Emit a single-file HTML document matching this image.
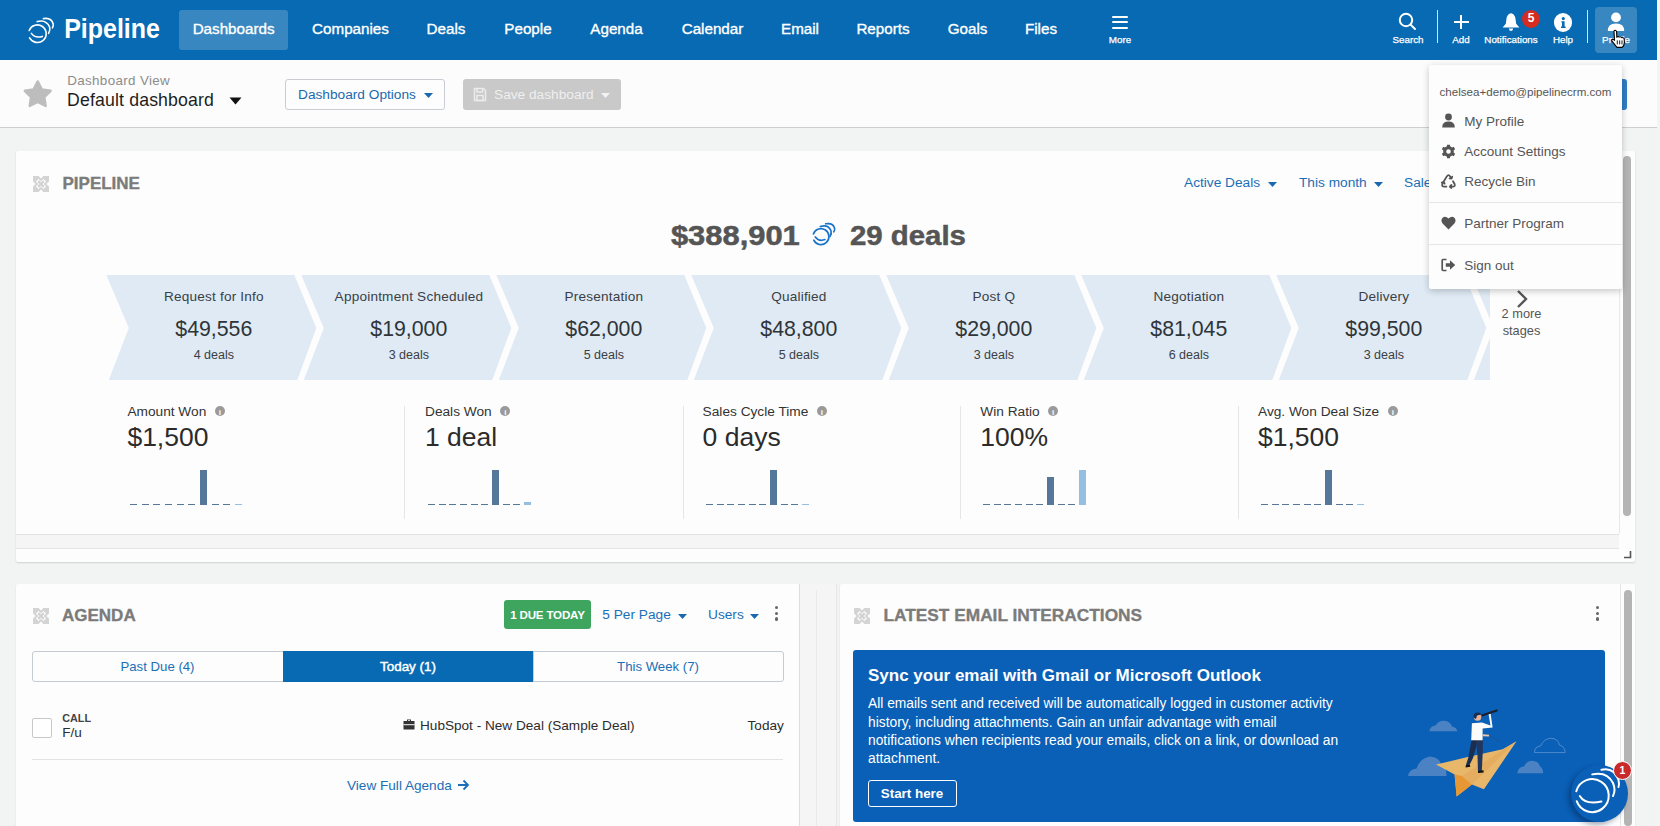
<!DOCTYPE html>
<html><head><meta charset="utf-8"><title>Pipeline Dashboard</title>
<style>
html,body{margin:0;padding:0;}
body{width:1660px;height:826px;overflow:hidden;position:relative;background:#f2f3f3;font-family:"Liberation Sans",sans-serif;}
.t{position:absolute;white-space:nowrap;line-height:1;}
.r{position:absolute;}
svg{position:absolute;overflow:visible;}
</style></head><body>
<div class="r" style="left:1657px;top:0px;width:3px;height:826px;background:#f4f4f4;"></div>
<div class="r" style="left:0px;top:0px;width:1657px;height:60px;background:#086ab2;"></div>
<svg style="left:20px;top:10px" width="40" height="40" viewBox="0 0 40 40" fill="none" stroke="#fff" stroke-width="1.6" stroke-linecap="round">
<path d="M9.2 20.5 A8.8 8.8 0 1 1 9.6 27.8"/>
<path d="M11.4 23.4 Q15 28.6 22.3 26.4"/>
<path d="M17.2 11.6 Q26 9 29.6 17 Q30.6 20.5 28.6 23.4"/>
<path d="M23.4 8.6 Q31.5 7.4 33.2 14 Q33.6 16 32.4 17.8"/>
</svg>
<div class="t" style="left:64.02px;top:15.00px;font-size:27.37px;color:#fff;font-weight:bold;transform:scaleX(0.9125);transform-origin:1.78px 0;">Pipeline</div>
<div class="r" style="left:179px;top:10px;width:109px;height:40px;background:rgba(255,255,255,0.2);border-radius:3px;"></div>
<div class="t" style="left:173.60px;width:120px;text-align:center;top:21.00px;font-size:15.2px;color:#fff;-webkit-text-stroke:0.35px #fff;">Dashboards</div>
<div class="t" style="left:290.50px;width:120px;text-align:center;top:21.00px;font-size:15.2px;color:#fff;-webkit-text-stroke:0.35px #fff;">Companies</div>
<div class="t" style="left:386.00px;width:120px;text-align:center;top:21.00px;font-size:15.2px;color:#fff;-webkit-text-stroke:0.35px #fff;">Deals</div>
<div class="t" style="left:468.00px;width:120px;text-align:center;top:21.00px;font-size:15.2px;color:#fff;-webkit-text-stroke:0.35px #fff;">People</div>
<div class="t" style="left:556.50px;width:120px;text-align:center;top:21.00px;font-size:15.2px;color:#fff;-webkit-text-stroke:0.35px #fff;">Agenda</div>
<div class="t" style="left:652.50px;width:120px;text-align:center;top:21.00px;font-size:15.2px;color:#fff;-webkit-text-stroke:0.35px #fff;">Calendar</div>
<div class="t" style="left:740.00px;width:120px;text-align:center;top:21.00px;font-size:15.2px;color:#fff;-webkit-text-stroke:0.35px #fff;">Email</div>
<div class="t" style="left:823.00px;width:120px;text-align:center;top:21.00px;font-size:15.2px;color:#fff;-webkit-text-stroke:0.35px #fff;">Reports</div>
<div class="t" style="left:907.60px;width:120px;text-align:center;top:21.00px;font-size:15.2px;color:#fff;-webkit-text-stroke:0.35px #fff;">Goals</div>
<div class="t" style="left:981.00px;width:120px;text-align:center;top:21.00px;font-size:15.2px;color:#fff;-webkit-text-stroke:0.35px #fff;">Files</div>
<div class="r" style="left:1112px;top:15.6px;width:16px;height:2px;background:#fff;border-radius:1px;"></div>
<div class="r" style="left:1112px;top:21.3px;width:16px;height:2px;background:#fff;border-radius:1px;"></div>
<div class="r" style="left:1112px;top:26.9px;width:16px;height:2px;background:#fff;border-radius:1px;"></div>
<div class="t" style="left:1080.00px;width:80px;text-align:center;top:35.00px;font-size:9.8px;color:#fff;-webkit-text-stroke:0.25px #fff;">More</div>
<div class="t" style="left:1368.00px;width:80px;text-align:center;top:35.00px;font-size:9.8px;color:#fff;-webkit-text-stroke:0.25px #fff;">Search</div>
<div class="t" style="left:1421.00px;width:80px;text-align:center;top:35.00px;font-size:9.8px;color:#fff;-webkit-text-stroke:0.25px #fff;">Add</div>
<div class="t" style="left:1471.00px;width:80px;text-align:center;top:35.00px;font-size:9.8px;color:#fff;-webkit-text-stroke:0.25px #fff;">Notifications</div>
<div class="t" style="left:1523.00px;width:80px;text-align:center;top:35.00px;font-size:9.8px;color:#fff;-webkit-text-stroke:0.25px #fff;">Help</div>
<div class="t" style="left:1576.00px;width:80px;text-align:center;top:35.00px;font-size:9.8px;color:#fff;-webkit-text-stroke:0.25px #fff;">Profile</div>
<svg style="left:1398px;top:12px" width="20" height="20" viewBox="0 0 20 20" fill="none" stroke="#fff" stroke-width="2" stroke-linecap="round">
<circle cx="8" cy="8" r="6.2"/><path d="M12.6 12.6 L17 17"/></svg>
<div class="r" style="left:1437.3px;top:10px;width:1.2px;height:33px;background:rgba(225,245,255,0.9);"></div>
<div class="r" style="left:1587px;top:10px;width:1.2px;height:33px;background:rgba(225,245,255,0.9);"></div>
<div class="r" style="left:1454px;top:21.3px;width:14.5px;height:2px;background:#fff;"></div>
<div class="r" style="left:1460.2px;top:15.3px;width:2px;height:14px;background:#fff;"></div>
<svg style="left:1502px;top:12px" width="18" height="20" viewBox="0 0 18 20">
<path fill="#fff" d="M9 1.2 C11.8 1.6 13.4 4.4 13.6 7.6 L14.2 11.8 L17.4 15.6 L0.6 15.6 L3.8 11.8 L4.4 7.6 C4.6 4.4 6.2 1.6 9 1.2 Z"/>
<path fill="#fff" d="M6.8 16.5 L11.2 16.5 Q10.6 19 9 19 Q7.4 19 6.8 16.5Z"/></svg>
<div class="r" style="left:1522px;top:10px;width:18px;height:18px;border-radius:50%;background:#d62b1f;"></div>
<div class="t" style="left:1522.00px;width:18px;text-align:center;top:12.00px;font-size:12px;color:#fff;font-weight:bold;">5</div>
<div class="r" style="left:1553.5px;top:13px;width:18.5px;height:18.5px;border-radius:50%;background:#fff;"></div>
<svg style="left:1553.5px;top:13px" width="18.5" height="18.5" viewBox="0 0 18.5 18.5" fill="#086ab2"><circle cx="9.3" cy="5.6" r="1.6"/><path d="M7.4 8.2 H10.6 V13.6 H11.6 V15 H7 V13.6 H8 V9.6 H7.4 Z"/></svg>
<div class="r" style="left:1595px;top:7px;width:42px;height:46px;background:rgba(255,255,255,0.2);border-radius:4px;"></div>
<svg style="left:1605px;top:11px" width="22" height="22" viewBox="0 0 22 22" fill="#fff">
<circle cx="11" cy="6.4" r="4.9"/><path d="M2.8 20 Q2.8 12.6 11 12.6 Q19.2 12.6 19.2 20 Z"/></svg>
<svg style="left:1609px;top:29px" width="20" height="20" viewBox="0 0 20 20">
<path fill="#fff" stroke="#000" stroke-width="1.1" stroke-linejoin="round" d="M5.2 1.6 Q6.9 0.8 7.6 2.4 L7.8 8.2 Q9 7.2 10.4 8 Q11.8 7.4 12.8 8.6 Q14.4 8.2 15.2 9.8 L15.4 13.6 Q15.2 16.6 13.2 18.4 L8 18.4 Q5.8 15.8 3 12.2 Q2.2 10.8 3.6 10.3 Q4.7 10.2 5.5 11.4 L5 2.6 Z"/>
<path stroke="#000" stroke-width="0.9" d="M8.3 11.4 V15.4 M10.7 11.4 V15.4 M13 11.4 V15.4"/></svg>
<div class="r" style="left:0px;top:60px;width:1657px;height:67px;background:#fcfcfc;"></div>
<div class="r" style="left:0px;top:127px;width:1657px;height:1px;background:#cfcfcf;"></div>
<svg style="left:22px;top:78px" width="32" height="31" viewBox="0 0 32 31"><path fill="#bdbdbd" stroke="#bdbdbd" stroke-width="2.4" stroke-linejoin="round" d="M15.70 3.40 L19.81 11.34 L28.63 12.80 L22.36 19.16 L23.69 28.00 L15.70 24.00 L7.71 28.00 L9.04 19.16 L2.77 12.80 L11.59 11.34 Z"/></svg>
<div class="t" style="left:67.2px;top:74.00px;font-size:13.4px;color:#8c8c8c;letter-spacing:0.35px;">Dashboard View</div>
<div class="t" style="left:67px;top:92.00px;font-size:17.7px;color:#1e1e1e;letter-spacing:0.15px;">Default dashboard</div>
<svg style="left:229px;top:97px" width="13" height="8" viewBox="0 0 13 8"><path d="M0.5 0.5 L12.5 0.5 L6.5 7.5 Z" fill="#111"/></svg>
<div class="r" style="left:285px;top:79px;width:158px;height:29px;border:1px solid #c9cdd1;border-radius:3px;background:#fdfdfd;"></div>
<div class="t" style="left:298px;top:88.00px;font-size:13.7px;color:#1b69ad;">Dashboard Options</div>
<svg style="left:424.0px;top:93.0px" width="9" height="5" viewBox="0 0 9 5"><path d="M0 0 L9 0 L4.5 5 Z" fill="#1b69ad"/></svg>
<div class="r" style="left:463px;top:79px;width:158px;height:31px;background:#c9c9c9;border-radius:3px;"></div>
<svg style="left:473px;top:87px" width="14" height="15" viewBox="0 0 14 15" fill="none" stroke="#ececec" stroke-width="1.5">
<path d="M1.5 1.5 H10.5 L12.5 3.5 V13.5 H1.5 Z"/><path d="M4 1.5 V5 H9.5 V1.5"/><rect x="4" y="8.5" width="6" height="5"/></svg>
<div class="t" style="left:494px;top:88.00px;font-size:13.7px;color:#efefef;">Save dashboard</div>
<svg style="left:600.5px;top:93.0px" width="9" height="5" viewBox="0 0 9 5"><path d="M0 0 L9 0 L4.5 5 Z" fill="#f2f2f2"/></svg>
<div class="r" style="left:1540px;top:79px;width:87px;height:31px;background:#2f7fc4;border-radius:3px;"></div>
<div class="r" style="left:16px;top:151px;width:1619px;height:411px;background:#fdfdfd;border-radius:2px;box-shadow:0 1px 2px rgba(0,0,0,0.14);"></div>
<div class="r" style="left:16px;top:534px;width:1603px;height:1px;background:#e2e2e2;"></div>
<div class="r" style="left:16px;top:535px;width:1603px;height:13px;background:#f5f5f5;"></div>
<div class="r" style="left:16px;top:548px;width:1603px;height:1px;background:#e4e4e4;"></div>
<div class="r" style="left:1619px;top:151px;width:1px;height:383px;background:#e8e8e8;"></div>
<div class="r" style="left:1623px;top:156px;width:8px;height:360px;background:#b4b4b4;border-radius:4px;"></div>
<svg style="left:1623px;top:550px" width="9" height="9" viewBox="0 0 9 9"><path d="M7.5 1 V7.5 H1" fill="none" stroke="#555" stroke-width="1.6"/></svg>
<svg style="left:32.5px;top:175.5px" width="16" height="16" viewBox="0 0 16 16" fill="#d4d4d4">
<path d="M0 0 H5.6 L8 2.6 L10.4 0 H16 V5.6 L13.4 8 L16 10.4 V16 H10.4 L8 13.4 L5.6 16 H0 V10.4 L2.6 8 L0 5.6 Z M8 5.2 L5.6 3 L3 5.6 L5.2 8 L3 10.4 L5.6 13 L8 10.8 L10.4 13 L13 10.4 L10.8 8 L13 5.6 L10.4 3 Z" fill-rule="evenodd"/>
<path d="M5.2 5.2 L10.8 10.8 M10.8 5.2 L5.2 10.8" stroke="#d4d4d4" stroke-width="2.6"/></svg>
<div class="t" style="left:62.5px;top:175.00px;font-size:17px;color:#7b7b7b;font-weight:bold;-webkit-text-stroke:0.35px #7b7b7b;">PIPELINE</div>
<div class="t" style="left:1184px;top:176.00px;font-size:13.7px;color:#1b6fb6;">Active Deals</div>
<svg style="left:1268.0px;top:181.5px" width="9" height="5" viewBox="0 0 9 5"><path d="M0 0 L9 0 L4.5 5 Z" fill="#1b69ad"/></svg>
<div class="t" style="left:1299px;top:176.00px;font-size:13.7px;color:#1b6fb6;">This month</div>
<svg style="left:1373.5px;top:181.5px" width="9" height="5" viewBox="0 0 9 5"><path d="M0 0 L9 0 L4.5 5 Z" fill="#1b69ad"/></svg>
<div class="t" style="left:1404px;top:176.00px;font-size:13.7px;color:#1b6fb6;">Sales</div>
<div class="t" style="left:670.80px;top:223.00px;font-size:26.96px;color:#555;font-weight:bold;transform:scaleX(1.1462);transform-origin:0.40px 0;-webkit-text-stroke:0.5px #555;">$388,901</div>
<svg style="left:810px;top:221px" width="28" height="26" viewBox="0 0 30 28" fill="none" stroke="#1a73c9" stroke-width="1.8" stroke-linecap="round">
<path d="M3.6 14 A8.6 8.6 0 1 1 4 20.6"/>
<path d="M5.6 17.2 Q9.5 22.5 16 20"/>
<path d="M11 6 Q19.5 3.5 22.5 10.5 Q23.4 13.5 21.6 16.6"/>
<path d="M16.8 3 Q25 1.8 26.4 8 Q26.8 10 25.6 11.6"/>
</svg>
<div class="t" style="left:849.86px;top:223.00px;font-size:26.96px;color:#555;font-weight:bold;transform:scaleX(1.0909);transform-origin:0.94px 0;-webkit-text-stroke:0.5px #555;">29 deals</div>
<svg style="left:0px;top:0px" width="1660" height="826" viewBox="0 0 1660 826"><defs><clipPath id="stc"><rect x="100" y="270" width="1390" height="120"/></clipPath></defs><g clip-path="url(#stc)" fill="#dfeaf4"><polygon points="106.3,275 294.3,275 316.3,328 297.3,380 108.8,380 128.8,328"/><polygon points="301.3,275 489.3,275 511.3,328 492.3,380 303.8,380 323.8,328"/><polygon points="496.3,275 684.3,275 706.3,328 687.3,380 498.8,380 518.8,328"/><polygon points="691.3,275 879.3,275 901.3,328 882.3,380 693.8,380 713.8,328"/><polygon points="886.3,275 1074.3,275 1096.3,328 1077.3,380 888.8,380 908.8,328"/><polygon points="1081.3,275 1269.3,275 1291.3,328 1272.3,380 1083.8,380 1103.8,328"/><polygon points="1276.3,275 1464.3,275 1486.3,328 1467.3,380 1278.8,380 1298.8,328"/><polygon points="1471.3,275 1659.3,275 1681.3,328 1662.3,380 1473.8,380 1493.8,328"/></g></svg>
<div class="t" style="left:123.90px;width:180px;text-align:center;top:290.00px;font-size:13.6px;color:#3a4045;letter-spacing:0.2px;">Request for Info</div>
<div class="t" style="left:123.80px;width:180px;text-align:center;top:319.00px;font-size:21.3px;color:#2e3438;">$49,556</div>
<div class="t" style="left:123.80px;width:180px;text-align:center;top:349.00px;font-size:12.5px;color:#3a4045;">4 deals</div>
<div class="t" style="left:318.90px;width:180px;text-align:center;top:290.00px;font-size:13.6px;color:#3a4045;letter-spacing:0.2px;">Appointment Scheduled</div>
<div class="t" style="left:318.80px;width:180px;text-align:center;top:319.00px;font-size:21.3px;color:#2e3438;">$19,000</div>
<div class="t" style="left:318.80px;width:180px;text-align:center;top:349.00px;font-size:12.5px;color:#3a4045;">3 deals</div>
<div class="t" style="left:513.90px;width:180px;text-align:center;top:290.00px;font-size:13.6px;color:#3a4045;letter-spacing:0.2px;">Presentation</div>
<div class="t" style="left:513.80px;width:180px;text-align:center;top:319.00px;font-size:21.3px;color:#2e3438;">$62,000</div>
<div class="t" style="left:513.80px;width:180px;text-align:center;top:349.00px;font-size:12.5px;color:#3a4045;">5 deals</div>
<div class="t" style="left:708.90px;width:180px;text-align:center;top:290.00px;font-size:13.6px;color:#3a4045;letter-spacing:0.2px;">Qualified</div>
<div class="t" style="left:708.80px;width:180px;text-align:center;top:319.00px;font-size:21.3px;color:#2e3438;">$48,800</div>
<div class="t" style="left:708.80px;width:180px;text-align:center;top:349.00px;font-size:12.5px;color:#3a4045;">5 deals</div>
<div class="t" style="left:903.90px;width:180px;text-align:center;top:290.00px;font-size:13.6px;color:#3a4045;letter-spacing:0.2px;">Post Q</div>
<div class="t" style="left:903.80px;width:180px;text-align:center;top:319.00px;font-size:21.3px;color:#2e3438;">$29,000</div>
<div class="t" style="left:903.80px;width:180px;text-align:center;top:349.00px;font-size:12.5px;color:#3a4045;">3 deals</div>
<div class="t" style="left:1098.90px;width:180px;text-align:center;top:290.00px;font-size:13.6px;color:#3a4045;letter-spacing:0.2px;">Negotiation</div>
<div class="t" style="left:1098.80px;width:180px;text-align:center;top:319.00px;font-size:21.3px;color:#2e3438;">$81,045</div>
<div class="t" style="left:1098.80px;width:180px;text-align:center;top:349.00px;font-size:12.5px;color:#3a4045;">6 deals</div>
<div class="t" style="left:1293.90px;width:180px;text-align:center;top:290.00px;font-size:13.6px;color:#3a4045;letter-spacing:0.2px;">Delivery</div>
<div class="t" style="left:1293.80px;width:180px;text-align:center;top:319.00px;font-size:21.3px;color:#2e3438;">$99,500</div>
<div class="t" style="left:1293.80px;width:180px;text-align:center;top:349.00px;font-size:12.5px;color:#3a4045;">3 deals</div>
<svg style="left:1515px;top:289px" width="14" height="20" viewBox="0 0 14 20"><path d="M3 2 L11 10 L3 18" fill="none" stroke="#555" stroke-width="2.4"/></svg>
<div class="t" style="left:1481.50px;width:80px;text-align:center;top:308.00px;font-size:12.8px;color:#555;">2 more</div>
<div class="t" style="left:1481.50px;width:80px;text-align:center;top:325.00px;font-size:12.8px;color:#555;">stages</div>
<div class="t" style="left:127.4px;top:405.00px;font-size:13.7px;color:#333;">Amount Won</div>
<div class="r" style="left:214.8px;top:406.3px;width:10px;height:10px;border-radius:50%;background:#9a9a9a;"></div>
<div class="t" style="left:214.84px;width:10px;text-align:center;top:409.00px;font-size:8px;color:#fff;font-weight:bold;">i</div>
<div class="t" style="left:127.4px;top:424.00px;font-size:26.5px;color:#2b2b2b;">$1,500</div>
<div class="r" style="left:130.0px;top:503.5px;width:7px;height:1.6px;background:#557799;"></div>
<div class="r" style="left:141.67px;top:503.5px;width:7px;height:1.6px;background:#557799;"></div>
<div class="r" style="left:153.34px;top:503.5px;width:7px;height:1.6px;background:#557799;"></div>
<div class="r" style="left:165.01px;top:503.5px;width:7px;height:1.6px;background:#557799;"></div>
<div class="r" style="left:176.68px;top:503.5px;width:7px;height:1.6px;background:#557799;"></div>
<div class="r" style="left:188.35px;top:503.5px;width:7px;height:1.6px;background:#557799;"></div>
<div class="r" style="left:200.02px;top:470px;width:7px;height:35px;background:#557799;"></div>
<div class="r" style="left:211.69px;top:503.5px;width:7px;height:1.6px;background:#557799;"></div>
<div class="r" style="left:223.36px;top:503.5px;width:7px;height:1.6px;background:#557799;"></div>
<div class="r" style="left:235.03px;top:503.5px;width:7px;height:1.6px;background:#94bfe3;"></div>
<div class="t" style="left:425px;top:405.00px;font-size:13.7px;color:#333;">Deals Won</div>
<div class="r" style="left:500.3px;top:406.3px;width:10px;height:10px;border-radius:50%;background:#9a9a9a;"></div>
<div class="t" style="left:500.25px;width:10px;text-align:center;top:409.00px;font-size:8px;color:#fff;font-weight:bold;">i</div>
<div class="t" style="left:425px;top:424.00px;font-size:26.5px;color:#2b2b2b;">1 deal</div>
<div class="r" style="left:428.0px;top:503.5px;width:7px;height:1.6px;background:#557799;"></div>
<div class="r" style="left:438.67px;top:503.5px;width:7px;height:1.6px;background:#557799;"></div>
<div class="r" style="left:449.34px;top:503.5px;width:7px;height:1.6px;background:#557799;"></div>
<div class="r" style="left:460.01px;top:503.5px;width:7px;height:1.6px;background:#557799;"></div>
<div class="r" style="left:470.68px;top:503.5px;width:7px;height:1.6px;background:#557799;"></div>
<div class="r" style="left:481.35px;top:503.5px;width:7px;height:1.6px;background:#557799;"></div>
<div class="r" style="left:492.02px;top:470px;width:7px;height:35px;background:#557799;"></div>
<div class="r" style="left:502.69px;top:503.5px;width:7px;height:1.6px;background:#557799;"></div>
<div class="r" style="left:513.36px;top:503.5px;width:7px;height:1.6px;background:#557799;"></div>
<div class="r" style="left:524.03px;top:502px;width:7px;height:3px;background:#94bfe3;"></div>
<div class="t" style="left:702.6px;top:405.00px;font-size:13.7px;color:#333;">Sales Cycle Time</div>
<div class="r" style="left:816.9px;top:406.3px;width:10px;height:10px;border-radius:50%;background:#9a9a9a;"></div>
<div class="t" style="left:816.92px;width:10px;text-align:center;top:409.00px;font-size:8px;color:#fff;font-weight:bold;">i</div>
<div class="t" style="left:702.6px;top:424.00px;font-size:26.5px;color:#2b2b2b;">0 days</div>
<div class="r" style="left:706.1px;top:503.5px;width:7px;height:1.6px;background:#557799;"></div>
<div class="r" style="left:716.77px;top:503.5px;width:7px;height:1.6px;background:#557799;"></div>
<div class="r" style="left:727.44px;top:503.5px;width:7px;height:1.6px;background:#557799;"></div>
<div class="r" style="left:738.11px;top:503.5px;width:7px;height:1.6px;background:#557799;"></div>
<div class="r" style="left:748.78px;top:503.5px;width:7px;height:1.6px;background:#557799;"></div>
<div class="r" style="left:759.45px;top:503.5px;width:7px;height:1.6px;background:#557799;"></div>
<div class="r" style="left:770.12px;top:470px;width:7px;height:35px;background:#557799;"></div>
<div class="r" style="left:780.79px;top:503.5px;width:7px;height:1.6px;background:#557799;"></div>
<div class="r" style="left:791.46px;top:503.5px;width:7px;height:1.6px;background:#557799;"></div>
<div class="r" style="left:802.13px;top:503.5px;width:7px;height:1.6px;background:#94bfe3;"></div>
<div class="t" style="left:980.3px;top:405.00px;font-size:13.7px;color:#333;">Win Ratio</div>
<div class="r" style="left:1048.2px;top:406.3px;width:10px;height:10px;border-radius:50%;background:#9a9a9a;"></div>
<div class="t" style="left:1048.18px;width:10px;text-align:center;top:409.00px;font-size:8px;color:#fff;font-weight:bold;">i</div>
<div class="t" style="left:980.3px;top:424.00px;font-size:26.5px;color:#2b2b2b;">100%</div>
<div class="r" style="left:983.0px;top:503.5px;width:7px;height:1.6px;background:#557799;"></div>
<div class="r" style="left:993.67px;top:503.5px;width:7px;height:1.6px;background:#557799;"></div>
<div class="r" style="left:1004.34px;top:503.5px;width:7px;height:1.6px;background:#557799;"></div>
<div class="r" style="left:1015.01px;top:503.5px;width:7px;height:1.6px;background:#557799;"></div>
<div class="r" style="left:1025.68px;top:503.5px;width:7px;height:1.6px;background:#557799;"></div>
<div class="r" style="left:1036.35px;top:503.5px;width:7px;height:1.6px;background:#557799;"></div>
<div class="r" style="left:1047.02px;top:477.2px;width:7px;height:27.8px;background:#557799;"></div>
<div class="r" style="left:1057.69px;top:503.5px;width:7px;height:1.6px;background:#557799;"></div>
<div class="r" style="left:1068.36px;top:503.5px;width:7px;height:1.6px;background:#557799;"></div>
<div class="r" style="left:1079.03px;top:470px;width:7px;height:35px;background:#94bfe3;"></div>
<div class="t" style="left:1258px;top:405.00px;font-size:13.7px;color:#333;">Avg. Won Deal Size</div>
<div class="r" style="left:1387.8px;top:406.3px;width:10px;height:10px;border-radius:50%;background:#9a9a9a;"></div>
<div class="t" style="left:1387.83px;width:10px;text-align:center;top:409.00px;font-size:8px;color:#fff;font-weight:bold;">i</div>
<div class="t" style="left:1258px;top:424.00px;font-size:26.5px;color:#2b2b2b;">$1,500</div>
<div class="r" style="left:1261.1px;top:503.5px;width:7px;height:1.6px;background:#557799;"></div>
<div class="r" style="left:1271.77px;top:503.5px;width:7px;height:1.6px;background:#557799;"></div>
<div class="r" style="left:1282.44px;top:503.5px;width:7px;height:1.6px;background:#557799;"></div>
<div class="r" style="left:1293.11px;top:503.5px;width:7px;height:1.6px;background:#557799;"></div>
<div class="r" style="left:1303.78px;top:503.5px;width:7px;height:1.6px;background:#557799;"></div>
<div class="r" style="left:1314.45px;top:503.5px;width:7px;height:1.6px;background:#557799;"></div>
<div class="r" style="left:1325.12px;top:470px;width:7px;height:35px;background:#557799;"></div>
<div class="r" style="left:1335.79px;top:503.5px;width:7px;height:1.6px;background:#557799;"></div>
<div class="r" style="left:1346.46px;top:503.5px;width:7px;height:1.6px;background:#557799;"></div>
<div class="r" style="left:1357.13px;top:503.5px;width:7px;height:1.6px;background:#94bfe3;"></div>
<div class="r" style="left:404px;top:406px;width:1px;height:113px;background:#e6e6e6;"></div>
<div class="r" style="left:682.5px;top:406px;width:1px;height:113px;background:#e6e6e6;"></div>
<div class="r" style="left:959.5px;top:406px;width:1px;height:113px;background:#e6e6e6;"></div>
<div class="r" style="left:1237.5px;top:406px;width:1px;height:113px;background:#e6e6e6;"></div>
<div class="r" style="left:16px;top:584px;width:783px;height:260px;background:#fdfdfd;border-radius:2px 0 0 0;box-shadow:0 1px 2px rgba(0,0,0,0.10);"></div>
<div class="r" style="left:799px;top:584px;width:37px;height:242px;background:#f5f5f5;"></div>
<div class="r" style="left:799px;top:584px;width:1px;height:242px;background:#dedede;"></div>
<div class="r" style="left:815.5px;top:590px;width:1px;height:236px;background:#e9e9e9;"></div>
<div class="r" style="left:835.5px;top:584px;width:1px;height:242px;background:#e6e6e6;"></div>
<svg style="left:32.5px;top:607.5px" width="16" height="16" viewBox="0 0 16 16" fill="#d4d4d4">
<path d="M0 0 H5.6 L8 2.6 L10.4 0 H16 V5.6 L13.4 8 L16 10.4 V16 H10.4 L8 13.4 L5.6 16 H0 V10.4 L2.6 8 L0 5.6 Z M8 5.2 L5.6 3 L3 5.6 L5.2 8 L3 10.4 L5.6 13 L8 10.8 L10.4 13 L13 10.4 L10.8 8 L13 5.6 L10.4 3 Z" fill-rule="evenodd"/>
<path d="M5.2 5.2 L10.8 10.8 M10.8 5.2 L5.2 10.8" stroke="#d4d4d4" stroke-width="2.6"/></svg>
<div class="t" style="left:62px;top:607.00px;font-size:17px;color:#7b7b7b;font-weight:bold;-webkit-text-stroke:0.35px #7b7b7b;">AGENDA</div>
<div class="r" style="left:504px;top:600px;width:87px;height:29px;background:#3ea55e;border-radius:3px;"></div>
<div class="t" style="left:502.50px;width:90px;text-align:center;top:609.00px;font-size:11.6px;color:#fff;font-weight:bold;letter-spacing:-0.2px;">1 DUE TODAY</div>
<div class="t" style="left:602.3px;top:608.00px;font-size:13.7px;color:#1b6fb6;">5 Per Page</div>
<svg style="left:677.5px;top:613.5px" width="9" height="5" viewBox="0 0 9 5"><path d="M0 0 L9 0 L4.5 5 Z" fill="#1b69ad"/></svg>
<div class="t" style="left:708px;top:608.00px;font-size:13.7px;color:#1b6fb6;">Users</div>
<svg style="left:750.0px;top:613.5px" width="9" height="5" viewBox="0 0 9 5"><path d="M0 0 L9 0 L4.5 5 Z" fill="#1b69ad"/></svg>
<div class="r" style="left:774.7px;top:605.7px;width:3.8px;height:3.8px;border-radius:50%;background:#666;"></div>
<div class="r" style="left:774.7px;top:611.5px;width:3.8px;height:3.8px;border-radius:50%;background:#666;"></div>
<div class="r" style="left:774.7px;top:617.3000000000001px;width:3.8px;height:3.8px;border-radius:50%;background:#666;"></div>
<div class="r" style="left:32px;top:651px;width:750px;height:29px;border:1px solid #c5cbd0;border-radius:3px;background:#fdfdfd;"></div>
<div class="r" style="left:283px;top:651px;width:250px;height:31px;background:#086ab2;"></div>
<div class="r" style="left:533px;top:652px;width:1px;height:29px;background:#c5cbd0;"></div>
<div class="t" style="left:57.50px;width:200px;text-align:center;top:660.00px;font-size:13.2px;color:#1b6fb6;">Past Due (4)</div>
<div class="t" style="left:308.00px;width:200px;text-align:center;top:660.00px;font-size:13.4px;color:#fff;-webkit-text-stroke:0.45px #fff;">Today (1)</div>
<div class="t" style="left:558.00px;width:200px;text-align:center;top:660.00px;font-size:13.2px;color:#1b6fb6;">This Week (7)</div>
<div class="r" style="left:32px;top:718px;width:18px;height:18px;border:1px solid #c8c8c8;border-radius:2px;background:#fff;"></div>
<div class="t" style="left:62.2px;top:713.00px;font-size:10.8px;color:#444;font-weight:bold;">CALL</div>
<div class="t" style="left:62.2px;top:726.00px;font-size:13.5px;color:#2c2c2c;">F/u</div>
<svg style="left:403px;top:719px" width="12" height="11" viewBox="0 0 12 11" fill="#333">
<path d="M4 0.5 H8 V2 H11.5 V10.5 H0.5 V2 H4 Z M5 1.3 V2 H7 V1.3 Z"/><rect x="0.5" y="5.2" width="11" height="1" fill="#fcfcfc"/></svg>
<div class="t" style="left:420px;top:719.00px;font-size:13.6px;color:#2c2c2c;">HubSpot - New Deal (Sample Deal)</div>
<div class="t" style="right:876.2px;top:719.00px;font-size:13.6px;color:#2c2c2c;text-align:right;">Today</div>
<div class="r" style="left:32px;top:759px;width:751px;height:1px;background:#e3e3e3;"></div>
<div class="t" style="left:347px;top:779.00px;font-size:13.6px;color:#1b6fb6;">View Full Agenda</div>
<svg style="left:457px;top:779px" width="13" height="12" viewBox="0 0 13 12"><path d="M1 6 H11 M6.5 1.5 L11 6 L6.5 10.5" fill="none" stroke="#1b6fb6" stroke-width="1.8"/></svg>
<div class="r" style="left:840px;top:584px;width:795px;height:260px;background:#fdfdfd;border-radius:2px;box-shadow:0 1px 2px rgba(0,0,0,0.10);"></div>
<div class="r" style="left:1620px;top:584px;width:1px;height:242px;background:#e6e6e6;"></div>
<div class="r" style="left:1624px;top:590px;width:8px;height:236px;background:#b4b4b4;border-radius:4px;"></div>
<svg style="left:853.5px;top:607.5px" width="16" height="16" viewBox="0 0 16 16" fill="#d4d4d4">
<path d="M0 0 H5.6 L8 2.6 L10.4 0 H16 V5.6 L13.4 8 L16 10.4 V16 H10.4 L8 13.4 L5.6 16 H0 V10.4 L2.6 8 L0 5.6 Z M8 5.2 L5.6 3 L3 5.6 L5.2 8 L3 10.4 L5.6 13 L8 10.8 L10.4 13 L13 10.4 L10.8 8 L13 5.6 L10.4 3 Z" fill-rule="evenodd"/>
<path d="M5.2 5.2 L10.8 10.8 M10.8 5.2 L5.2 10.8" stroke="#d4d4d4" stroke-width="2.6"/></svg>
<div class="t" style="left:883.5px;top:607.00px;font-size:17.3px;color:#7b7b7b;font-weight:bold;-webkit-text-stroke:0.35px #7b7b7b;">LATEST EMAIL INTERACTIONS</div>
<div class="r" style="left:1595.5px;top:605.7px;width:3.8px;height:3.8px;border-radius:50%;background:#666;"></div>
<div class="r" style="left:1595.5px;top:611.5px;width:3.8px;height:3.8px;border-radius:50%;background:#666;"></div>
<div class="r" style="left:1595.5px;top:617.3000000000001px;width:3.8px;height:3.8px;border-radius:50%;background:#666;"></div>
<div class="r" style="left:853px;top:650px;width:752px;height:172px;background:#0a5fb6;border-radius:3px;"></div>
<div class="t" style="left:868px;top:667.00px;font-size:17px;color:#fff;font-weight:bold;">Sync your email with Gmail or Microsoft Outlook</div>
<div class="t" style="left:868px;top:697.00px;font-size:13.8px;color:#fff;">All emails sent and received will be automatically logged in customer activity</div>
<div class="t" style="left:868px;top:716.00px;font-size:13.8px;color:#fff;">history, including attachments. Gain an unfair advantage with email</div>
<div class="t" style="left:868px;top:734.00px;font-size:13.8px;color:#fff;">notifications when recipients read your emails, click on a link, or download an</div>
<div class="t" style="left:868px;top:752.00px;font-size:13.8px;color:#fff;">attachment.</div>
<div class="r" style="left:868px;top:780px;width:87px;height:25px;border:1.5px solid #fff;border-radius:3px;"></div>
<div class="t" style="left:867.00px;width:90px;text-align:center;top:787.00px;font-size:13.4px;color:#fff;font-weight:bold;">Start here</div>
<svg style="left:1400px;top:700px" width="180" height="110" viewBox="0 0 180 110">
<g fill="#4a82c4">
<path d="M29.3 31.3 Q30 26 35.5 25.5 Q38.5 20.6 44 20.8 Q50.5 21.5 52 26.5 Q56.8 27.5 57.3 31.3 Z"/>
<path d="M8 76 Q9 69 16.5 68.5 Q20 58 30 56.5 Q39 57 41 64 Q46.6 65.5 46.6 76 Z"/>
<path d="M117.2 73.2 Q118 67 124 66.5 Q127 60.6 132.5 60.8 Q139 61.5 140 66.5 Q143.1 68 143.1 73.2 Z"/>
</g>
<path d="M134.5 52.6 Q134.5 46.5 140.5 46 Q144 38.5 151 38.2 Q158 38.5 159.5 45 Q165.1 46.5 165.1 52.6 Z" fill="none" stroke="#5f93cf" stroke-width="0.8"/>
<path d="M36 64.6 L66.6 57.3 L102.5 49.3 L116.5 41.3 L83.9 89.2 L71.9 84.6 L56.6 96.5 L54.6 74.6 Z" fill="#e8b76a"/>
<path d="M54.6 74.6 L56.6 96.5 L71.9 84.6 L62 76 Z" fill="#e79834"/>
<path d="M62 76 L116.5 41.3 L71.9 84.6 Z" fill="#e3a75a" opacity="0.6"/>
<path d="M71.5 40 L78 40 L73 58 L69 66 L65.5 66.5 L68.5 57 Z" fill="#1b2e50"/>
<path d="M76 40 L83 40 L82.6 55 L81.8 71.5 L78 72 L77.5 56 Z" fill="#22375e"/>
<path d="M66 65.5 L70 64.8 L70.2 66.8 L65.6 67.6 Z M78 71 L83.5 70.2 L83.6 72.4 L78 73 Z" fill="#111"/>
<path d="M71.9 23.3 L81.9 22.6 L90.5 25.6 L88.5 13.8 L90.6 13.4 L92.6 27.6 L82.6 28.6 L82.6 40.2 L71.2 40.2 Z" fill="#fbfbfb"/>
<path d="M82.6 34.2 L89.2 34.8 L89 36.4 L82.6 36.2 Z" fill="#f0c4a8"/>
<circle cx="77.6" cy="17.2" r="3.6" fill="#e9b39a"/>
<path d="M73.6 17.6 Q73.2 12.4 78 12.6 Q81 12.8 81.2 14.6 L77 15.4 L76 19 Z" fill="#1b2e50"/>
<path d="M81.5 14.6 L97.2 9.3 L97.8 11.3 L82.2 16.6 Z" fill="#1d1d2b"/>
<path d="M89.2 35.3 L100 42" stroke="#2a4a7a" stroke-width="0.6"/>
</svg>
<div class="r" style="left:1571px;top:765px;width:57px;height:57px;border-radius:50%;background:#0a5fb6;box-shadow:-3px 3px 5px rgba(0,20,60,0.35);"></div>
<svg style="left:1560px;top:750px" width="80" height="76" viewBox="0 0 80 76" fill="none" stroke="#fff" stroke-width="2" stroke-linecap="round">
<path d="M16.3 41.3 A16.5 16.5 0 1 1 16.7 51.2"/>
<path d="M19.8 46 Q25 55 41.4 51.6"/>
<path d="M32.2 24.4 Q47 21 53 33 Q56 40 53 46"/>
<path d="M41.4 19.8 Q54 17 58.5 30 Q59.5 34 58.5 37"/>
</svg>
<div class="r" style="left:1612.5px;top:761px;width:17px;height:17px;border-radius:50%;background:#c9292a;border:1.5px solid #fff;"></div>
<div class="t" style="left:1614.50px;width:16px;text-align:center;top:765.00px;font-size:10.5px;color:#fff;font-weight:bold;">1</div>
<div class="r" style="left:1429px;top:65px;width:193px;height:223.5px;background:#fdfdfd;border-radius:2px;box-shadow:0 2px 7px rgba(0,0,0,0.22);"></div>
<div class="t" style="left:1439.5px;top:86.00px;font-size:11.6px;color:#555;">chelsea+demo@pipelinecrm.com</div>
<div class="t" style="left:1464.3px;top:115.00px;font-size:13.5px;color:#555;">My Profile</div>
<div class="t" style="left:1464.3px;top:145.00px;font-size:13.5px;color:#555;">Account Settings</div>
<div class="t" style="left:1464.3px;top:175.00px;font-size:13.5px;color:#555;">Recycle Bin</div>
<div class="t" style="left:1464.3px;top:217.00px;font-size:13.5px;color:#555;">Partner Program</div>
<div class="t" style="left:1464.3px;top:259.00px;font-size:13.5px;color:#555;">Sign out</div>
<div class="r" style="left:1429px;top:202px;width:193px;height:1px;background:#e6e6e6;"></div>
<div class="r" style="left:1429px;top:244px;width:193px;height:1px;background:#e6e6e6;"></div>
<svg style="left:1441px;top:113px" width="15" height="15" viewBox="0 0 15 15" fill="#555"><circle cx="7.5" cy="4" r="3.4"/><path d="M1.2 14.4 Q1.2 8.6 7.5 8.6 Q13.8 8.6 13.8 14.4 Z"/></svg>
<svg style="left:1441px;top:143.5px" width="15" height="15" viewBox="0 0 15 15" fill="#555"><path fill-rule="evenodd" d="M5.90 2.34 L6.11 0.64 L8.89 0.64 L9.10 2.34 L11.17 3.54 L12.75 2.87 L14.14 5.27 L12.77 6.30 L12.77 8.70 L14.14 9.73 L12.75 12.13 L11.17 11.46 L9.10 12.66 L8.89 14.36 L6.11 14.36 L5.90 12.66 L3.83 11.46 L2.25 12.13 L0.86 9.73 L2.23 8.70 L2.23 6.30 L0.86 5.27 L2.25 2.87 L3.83 3.54 Z M7.5 5.2 A2.3 2.3 0 1 0 7.5 9.8 A2.3 2.3 0 1 0 7.5 5.2 Z"/></svg>
<svg style="left:1441px;top:173.5px" width="15" height="14" viewBox="0 0 15 14" fill="none" stroke="#555" stroke-width="1.8" stroke-linecap="round" stroke-linejoin="round"><path d="M3.2 6.8 L5.8 2.4 Q7.5 0 9.2 2.4 L10 3.8"/><path d="M8.6 4.4 L10.6 4.6 L11.2 2.6"/><path d="M12 7.2 L13.6 10 Q14.6 12.6 11.6 12.6 L9.2 12.6"/><path d="M10.4 11 L8.8 12.6 L10.4 14"/><path d="M5.4 12.6 L3.2 12.6 Q0.4 12.6 1.4 10 L2.4 8.4"/><path d="M0.8 8.6 L2.6 7.8 L3.6 9.6"/></svg>
<svg style="left:1441px;top:216px" width="15" height="14" viewBox="0 0 15 14" fill="#555"><path d="M7.5 13.5 L1.6 7.4 Q-0.6 4.6 1.4 2 Q4.2 -0.6 7.5 2.6 Q10.8 -0.6 13.6 2 Q15.6 4.6 13.4 7.4 Z"/></svg>
<svg style="left:1441px;top:258px" width="15" height="14" viewBox="0 0 15 14"><path d="M5.5 1.5 H2 Q1.2 1.5 1.2 2.4 V11.6 Q1.2 12.5 2 12.5 H5.5" fill="none" stroke="#555" stroke-width="1.7"/><path fill="#555" d="M4.8 5.2 H9 V2.2 L14.2 7 L9 11.8 V8.8 H4.8 Z"/></svg>
</body></html>
